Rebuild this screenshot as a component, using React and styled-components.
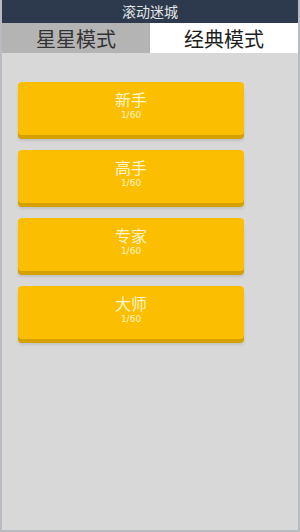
import React from 'react';
import styled, { createGlobalStyle } from 'styled-components';

const GlobalStyle = createGlobalStyle`
  html, body {
    margin: 0;
    padding: 0;
    background: #d8d8d8;
  }
  body {
    font-family: "Noto Sans CJK SC", "Noto Sans", sans-serif;
  }
`;

const Screen = styled.div`
  width: 300px;
  height: 532px;
  box-sizing: border-box;
  display: flex;
  flex-direction: column;
  background: #d8d8d8;
  border-left: 2px solid #b8bcc1;
  border-right: 2px solid #b8bcc1;
  border-bottom: 2px solid #b8bcc1;
  overflow: hidden;
`;

const TitleBar = styled.div`
  height: 23px;
  margin: 0 -2px;
  background: #2d3a4d;
  color: #e4e6ea;
  font-size: 14px;
  line-height: 23px;
  text-align: center;
`;

const Tabs = styled.div`
  display: flex;
  height: 30px;
`;

const Tab = styled.div`
  flex: 1;
  display: flex;
  align-items: center;
  justify-content: center;
  font-size: 20px;
  background: ${p => (p.$active ? '#ffffff' : '#b4b4b4')};
  color: ${p => (p.$active ? '#1e1e1e' : '#333333')};
`;

const List = styled.div`
  display: flex;
  flex-direction: column;
  gap: 15px;
  padding: 29px 0 0 16px;
`;

const LevelButton = styled.div`
  width: 226px;
  height: 53px;
  box-sizing: border-box;
  padding-top: 8px;
  border-radius: 4px;
  background: #fbbe00;
  box-shadow: 0 4px 0 #d5a100, 0 6px 3px rgba(0, 0, 0, 0.1);
  display: flex;
  flex-direction: column;
  align-items: center;
  color: #fff6cf;
`;

const LevelName = styled.div`
  font-size: 16px;
  line-height: 18px;
`;

const Progress = styled.div`
  font-family: "DejaVu Sans", sans-serif;
  font-size: 9px;
  line-height: 10px;
  margin-top: 2px;
`;

const levels = ['新手', '高手', '专家', '大师'];

export default function App() {
  return (
    <>
      <GlobalStyle />
      <Screen>
        <TitleBar>滚动迷城</TitleBar>
        <Tabs>
          <Tab>星星模式</Tab>
          <Tab $active>经典模式</Tab>
        </Tabs>
        <List>
          {levels.map(name => (
            <LevelButton key={name}>
              <LevelName>{name}</LevelName>
              <Progress>1/60</Progress>
            </LevelButton>
          ))}
        </List>
      </Screen>
    </>
  );
}
